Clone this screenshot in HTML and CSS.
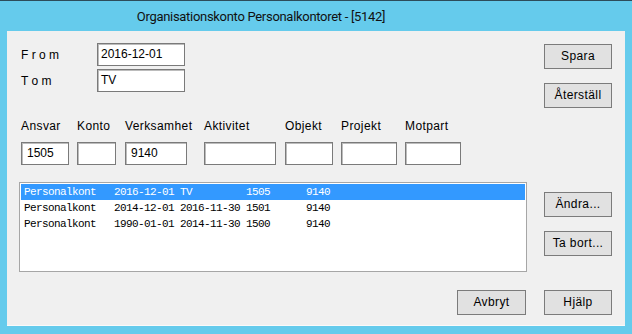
FILE: index.html
```html
<!DOCTYPE html>
<html lang="sv">
<head>
<meta charset="utf-8">
<title>Organisationskonto Personalkontoret</title>
<link rel="stylesheet" href="styles.css">
</head>
<body>
<div class="window">
  <div class="titlebar"><span class="title">Organisationskonto Personalkontoret - [5142]</span></div>
  <div class="client">
    <div class="row-top">
      <div class="dates">
        <div class="field"><span class="dlabel">F r o m</span><div class="input date">2016-12-01</div></div>
        <div class="field"><span class="dlabel">T o m</span><div class="input date">TV</div></div>
      </div>
      <div class="btncol top-btns">
        <div class="btn">Spara</div>
        <div class="btn">Återställ</div>
      </div>
    </div>
    <div class="criteria">
      <div class="crit c-ansvar"><span class="clabel">Ansvar</span><div class="input crit-in">1505</div></div>
      <div class="crit c-konto"><span class="clabel">Konto</span><div class="input crit-in"></div></div>
      <div class="crit c-verks"><span class="clabel">Verksamhet</span><div class="input crit-in">9140</div></div>
      <div class="crit c-akt"><span class="clabel">Aktivitet</span><div class="input crit-in"></div></div>
      <div class="crit c-obj"><span class="clabel">Objekt</span><div class="input crit-in"></div></div>
      <div class="crit c-proj"><span class="clabel">Projekt</span><div class="input crit-in"></div></div>
      <div class="crit c-mot"><span class="clabel">Motpart</span><div class="input crit-in"></div></div>
    </div>
    <div class="row-mid">
      <div class="list">
        <div class="item selected">Personalkont   2016-12-01 TV         1505      9140</div>
        <div class="item">Personalkont   2014-12-01 2016-11-30 1501      9140</div>
        <div class="item">Personalkont   1990-01-01 2014-11-30 1500      9140</div>
      </div>
      <div class="btncol mid-btns">
        <div class="btn">Ändra...</div>
        <div class="btn">Ta bort...</div>
      </div>
    </div>
    <div class="row-bottom">
      <div class="btn btn-wide">Avbryt</div>
      <div class="btn">Hjälp</div>
    </div>
  </div>
</div>
</body>
</html>
```
FILE: styles.css
```css
html, body {
  margin: 0;
  padding: 0;
  background: #65cbec;
}
body {
  width: 632px;
  height: 334px;
  overflow: hidden;
  font-family: "Liberation Sans", Arial, sans-serif;
  font-size: 12px;
  color: #000;
}
.window {
  width: 632px;
  height: 334px;
  box-sizing: border-box;
  border-top: 1px solid #2d4c5a;
  background: #65cbec;
  display: flex;
  flex-direction: column;
}
.titlebar {
  height: 30px;
  display: flex;
  align-items: center;
  justify-content: center;
  padding-right: 110px;
}
.title {
  font-family: Roboto, "Noto Sans", sans-serif;
  font-size: 13px;
  letter-spacing: -0.3px;
  color: #111;
}
.client {
  margin: 0 7px;
  width: 618px;
  height: 295px;
  box-sizing: border-box;
  background: #f0f0f0;
  border-bottom: 1px solid #fafafa;
  padding: 12px 13px 0 12px;
  display: flex;
  flex-direction: column;
  letter-spacing: 0.4px;
}
.row-top {
  display: flex;
  justify-content: space-between;
  height: 65px;
}
.dates {
  display: flex;
  flex-direction: column;
  gap: 3px;
  padding-left: 2px;
}
.field {
  display: flex;
  align-items: center;
  height: 23px;
}
.dlabel {
  width: 76px;
  letter-spacing: 0;
}
.input {
  box-sizing: border-box;
  height: 23px;
  line-height: 21px;
  background: #fff;
  border: 1px solid #7a7a7a;
  box-shadow: inset 1px 1px 0 #bcbcbc;
  padding-left: 3px;
  letter-spacing: 0;
  font-size: 12px;
  white-space: nowrap;
}
.date {
  width: 88px;
}
.btncol {
  display: flex;
  flex-direction: column;
  gap: 14px;
}
.top-btns {
  padding-top: 1px;
}
.btn {
  box-sizing: border-box;
  width: 68px;
  height: 25px;
  line-height: 23px;
  text-align: center;
  background: #e1e1e1;
  border: 1px solid #7b7b7b;
}
.btn-wide {
  width: 69px;
}
.criteria {
  display: flex;
  margin-top: 11px;
  padding-left: 2px;
}
.crit {
  display: flex;
  flex-direction: column;
  gap: 9px;
}
.clabel {
  height: 14px;
  line-height: 14px;
  white-space: nowrap;
}
.crit-in {
  width: 100%;
  padding-left: 5px;
}
.c-ansvar { width: 48px; }
.c-konto { width: 39px; margin-left: 8px; }
.c-verks { width: 62px; margin-left: 9px; }
.c-akt { width: 72px; margin-left: 17px; }
.c-obj { width: 48px; margin-left: 9px; }
.c-proj { width: 56px; margin-left: 8px; }
.c-mot { width: 56px; margin-left: 8px; }
.row-mid {
  display: flex;
  margin-top: 17px;
  height: 90px;
}
.list {
  box-sizing: border-box;
  width: 508px;
  height: 90px;
  background: #fff;
  border: 1px solid #a6a6a6;
  padding: 1px;
  letter-spacing: 0;
}
.item {
  height: 16px;
  line-height: 16px;
  padding-left: 3px;
  font-family: "Liberation Mono", "Courier New", monospace;
  font-size: 11px;
  letter-spacing: -0.6px;
  white-space: pre;
  color: #000;
}
.item.selected {
  background: #3399ff;
  color: #fff;
}
.mid-btns {
  margin-left: 17px;
  padding-top: 10px;
}
.row-bottom {
  display: flex;
  justify-content: flex-end;
  gap: 18px;
  margin-top: 18px;
}
```
